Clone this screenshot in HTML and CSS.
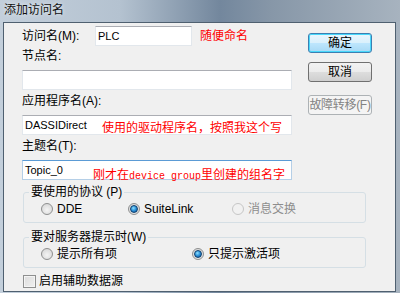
FILE: index.html
```html
<!DOCTYPE html>
<html lang="zh">
<head>
	<meta charset="UTF-8">
	<title>添加访问名</title>
	<link rel="stylesheet" href="styles.css">
</head>
<body>
	<div class="window">
		<div class="titlebar">添加访问名</div>
		<div class="client">
			<div class="top">
				<div class="fields">
					<div class="row">
						<label class="lbl-inline">访问名(M):</label>
						<div class="input short">PLC</div>
						<span class="note">随便命名</span>
					</div>
					<label class="lbl first">节点名:</label>
					<div class="input"></div>
					<label class="lbl">应用程序名(A):</label>
					<div class="input note-wrap">DASSIDirect
						<span class="note over app">使用的驱动程序名，按照我这个写</span>
					</div>
					<label class="lbl">主题名(T):</label>
					<div class="input hot note-wrap">Topic_0
						<span class="note over topic">刚才在<span class="mono">device group</span>里创建的组名字</span>
					</div>
				</div>
				<div class="buttons">
					<div class="btn default">确定</div>
					<div class="btn cancel">取消</div>
					<div class="btn disabled">故障转移(F)</div>
				</div>
			</div>

			<fieldset class="group">
				<legend>要使用的协议 (P)</legend>
				<div class="radios">
					<span class="opt w87"><i class="radio"></i>DDE</span>
					<span class="opt w104"><i class="radio on"></i>SuiteLink</span>
					<span class="opt off"><i class="radio"></i>消息交换</span>
				</div>
			</fieldset>

			<fieldset class="group second">
				<legend>要对服务器提示时(W)</legend>
				<div class="radios">
					<span class="opt w151"><i class="radio"></i>提示所有项</span>
					<span class="opt"><i class="radio on"></i>只提示激活项</span>
				</div>
			</fieldset>

			<div class="check"><i class="box"></i>启用辅助数据源</div>
		</div>
	</div>
</body>
</html>
```

FILE: styles.css
```css
*{padding: 0;margin: 0;box-sizing: border-box;}
body{
	font-family: "Liberation Sans", "Noto Sans CJK SC", sans-serif;
	font-size: 12px;
	color: #000;
	background: #fff;
}
.window{
	width: 400px;
	height: 293px;
	background: linear-gradient(90deg, #c3cfdb 0%, #b4c2d0 30%, #73879d 55%, #8797a8 68%, #a7b3bf 100%);
	display: flex;
	flex-direction: column;
}
.titlebar{
	height: 22px;
	line-height: 20px;
	padding-left: 4px;
	font-size: 12px;
	color: #111;
	text-shadow: 0 0 4px rgba(255,255,255,.8);
}
.client{
	width: 393px;
	height: 270px;
	margin-left: 3px;
	border: 1px solid #4f6070;
	background: #f0f0f0;
	padding: 3px 0 0 18px;
}
.top{
	display: flex;
	gap: 16px;
}
.fields{
	width: 270px;
}
.row{
	display: flex;
	align-items: center;
	height: 20px;
}
.lbl-inline{
	width: 73px;
	line-height: 14px;
}
.lbl{
	display: block;
	line-height: 14px;
	margin-top: 4px;
}
.lbl.first{
	margin-top: 3px;
}
.input{
	height: 20px;
	margin-top: 7px;
	background: #fff;
	border: 1px solid #e2e7ec;
	border-top-color: #abadb3;
	padding-left: 2px;
	line-height: 18px;
	font-size: 11px;
	position: relative;
}
.row .input{
	margin-top: 0;
}
.input.short{
	width: 97px;
}
.input.hot{
	border-color: #b5cfe7;
	border-top-color: #5b9bd5;
}
.note{
	color: #ff0000;
	font-size: 12px;
	line-height: 14px;
	margin-left: 8px;
	white-space: nowrap;
}
.note.over{
	position: absolute;
	margin-left: 0;
}
.note.app{
	left: 79px;
	top: 5px;
}
.note.topic{
	left: 70px;
	top: 7px;
}
.mono{
	font-family: "Liberation Mono", monospace;
	font-size: 10px;
}
.buttons{
	width: 64px;
	padding-top: 7px;
}
.btn{
	height: 20px;
	line-height: 18px;
	text-align: center;
	border: 1px solid #707070;
	border-radius: 3px;
	background: linear-gradient(#f2f2f2 0%, #ebebeb 50%, #dddddd 51%, #cfcfcf 100%);
	font-size: 12px;
}
.btn.default{
	border-color: #3c7fb1;
	box-shadow: inset 0 0 0 1px #48d8fb;
	background: linear-gradient(#eaf6fd 0%, #d9f0fc 50%, #bee6fd 51%, #a7d9f5 100%);
}
.btn.cancel{
	margin-top: 9px;
}
.btn.disabled{
	margin-top: 13px;
	border-color: #adb2b5;
	background: #f4f4f4;
	color: #838383;
	letter-spacing: -0.3px;
}
.group{
	width: 343px;
	margin-left: 1px;
	margin-top: 5px;
	border: 1px solid #d5dfe5;
	border-radius: 3px;
	padding: 0 0 5px 0;
}
.group.second{
	margin-top: 7px;
}
.group legend{
	margin-left: 5px;
	padding: 0 2px;
	line-height: 14px;
}
.radios{
	display: flex;
	height: 16px;
	margin-top: 2px;
	padding-left: 17px;
	align-items: center;
}
.opt{
	display: flex;
	align-items: center;
	line-height: 14px;
}
.opt.w87{width: 87px;}
.opt.w104{width: 104px;}
.opt.w151{width: 151px;}
.opt.off{color: #8d8d8d;}
.radio{
	width: 12px;
	height: 12px;
	border-radius: 50%;
	border: 1px solid #8e8f8f;
	background: radial-gradient(circle at 50% 60%, #f4f4f4 0%, #dcdcdc 70%, #c8c8c8 100%);
	margin-right: 4px;
	position: relative;
}
.opt.off .radio{
	border-color: #c6c6c6;
	background: #f1f1f1;
}
.radio.on::after{
	content: "";
	position: absolute;
	left: 2px;
	top: 2px;
	width: 6px;
	height: 6px;
	border-radius: 50%;
	background: radial-gradient(circle at 40% 35%, #8ce0ff 0%, #2a8fd8 50%, #0b4f8c 100%);
	border: 1px solid #0e3f6e;
	box-sizing: content-box;
	left: 1px;
	top: 1px;
}
.check{
	display: flex;
	align-items: center;
	margin-top: 6px;
	margin-left: 1px;
	line-height: 14px;
	height: 14px;
}
.box{
	width: 13px;
	height: 13px;
	border: 1px solid #8e8f8f;
	background: linear-gradient(135deg, #dcdcdc 0%, #f0f0f0 100%);
	box-shadow: inset 0 0 0 1px #f4f4f4;
	margin-right: 3px;
}
```
